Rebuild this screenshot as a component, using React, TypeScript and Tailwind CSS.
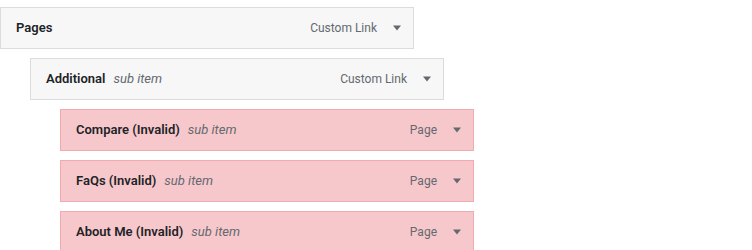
import React from 'react';

type Item = {
  title: string;
  sub?: boolean;
  type: string;
  depth: number;
  invalid?: boolean;
};

const items: Item[] = [
  { title: 'Pages', type: 'Custom Link', depth: 0 },
  { title: 'Additional', sub: true, type: 'Custom Link', depth: 1 },
  { title: 'Compare (Invalid)', sub: true, type: 'Page', depth: 2, invalid: true },
  { title: 'FaQs (Invalid)', sub: true, type: 'Page', depth: 2, invalid: true },
  { title: 'About Me (Invalid)', sub: true, type: 'Page', depth: 2, invalid: true },
];

function Arrow() {
  return (
    <svg width="8" height="6" viewBox="0 0 8 6" className="block">
      <path d="M0 0.5 L8 0.5 L4 5.5 Z" fill="#646970" />
    </svg>
  );
}

function MenuItem({ item }: { item: Item }) {
  const indent = item.depth === 0 ? 'ml-0' : item.depth === 1 ? 'ml-[30px]' : 'ml-[60px]';
  const colors = item.invalid
    ? 'bg-[#f7c8cb] border-[#f1abb0]'
    : 'bg-[#f7f7f7] border-[#dcdcde]';
  return (
    <div
      className={`${indent} ${colors} mb-[9px] flex h-[42px] w-[414px] items-center justify-between border pl-[15px] pr-[12px]`}
    >
      <div className="flex items-center text-[13px] leading-5">
        <span className="font-semibold text-[#1d2327]">{item.title}</span>
        {item.sub && <span className="ml-[8px] italic text-[#646970]">sub item</span>}
      </div>
      <div className="flex items-center gap-[16px]">
        <span className="text-[12px] leading-5 text-[#646970]">{item.type}</span>
        <Arrow />
      </div>
    </div>
  );
}

export default function App() {
  return (
    <div className="h-[250px] w-[752px] overflow-hidden bg-white pt-[7px] font-['Roboto',sans-serif]">
      {items.map((item) => (
        <MenuItem key={item.title} item={item} />
      ))}
    </div>
  );
}
